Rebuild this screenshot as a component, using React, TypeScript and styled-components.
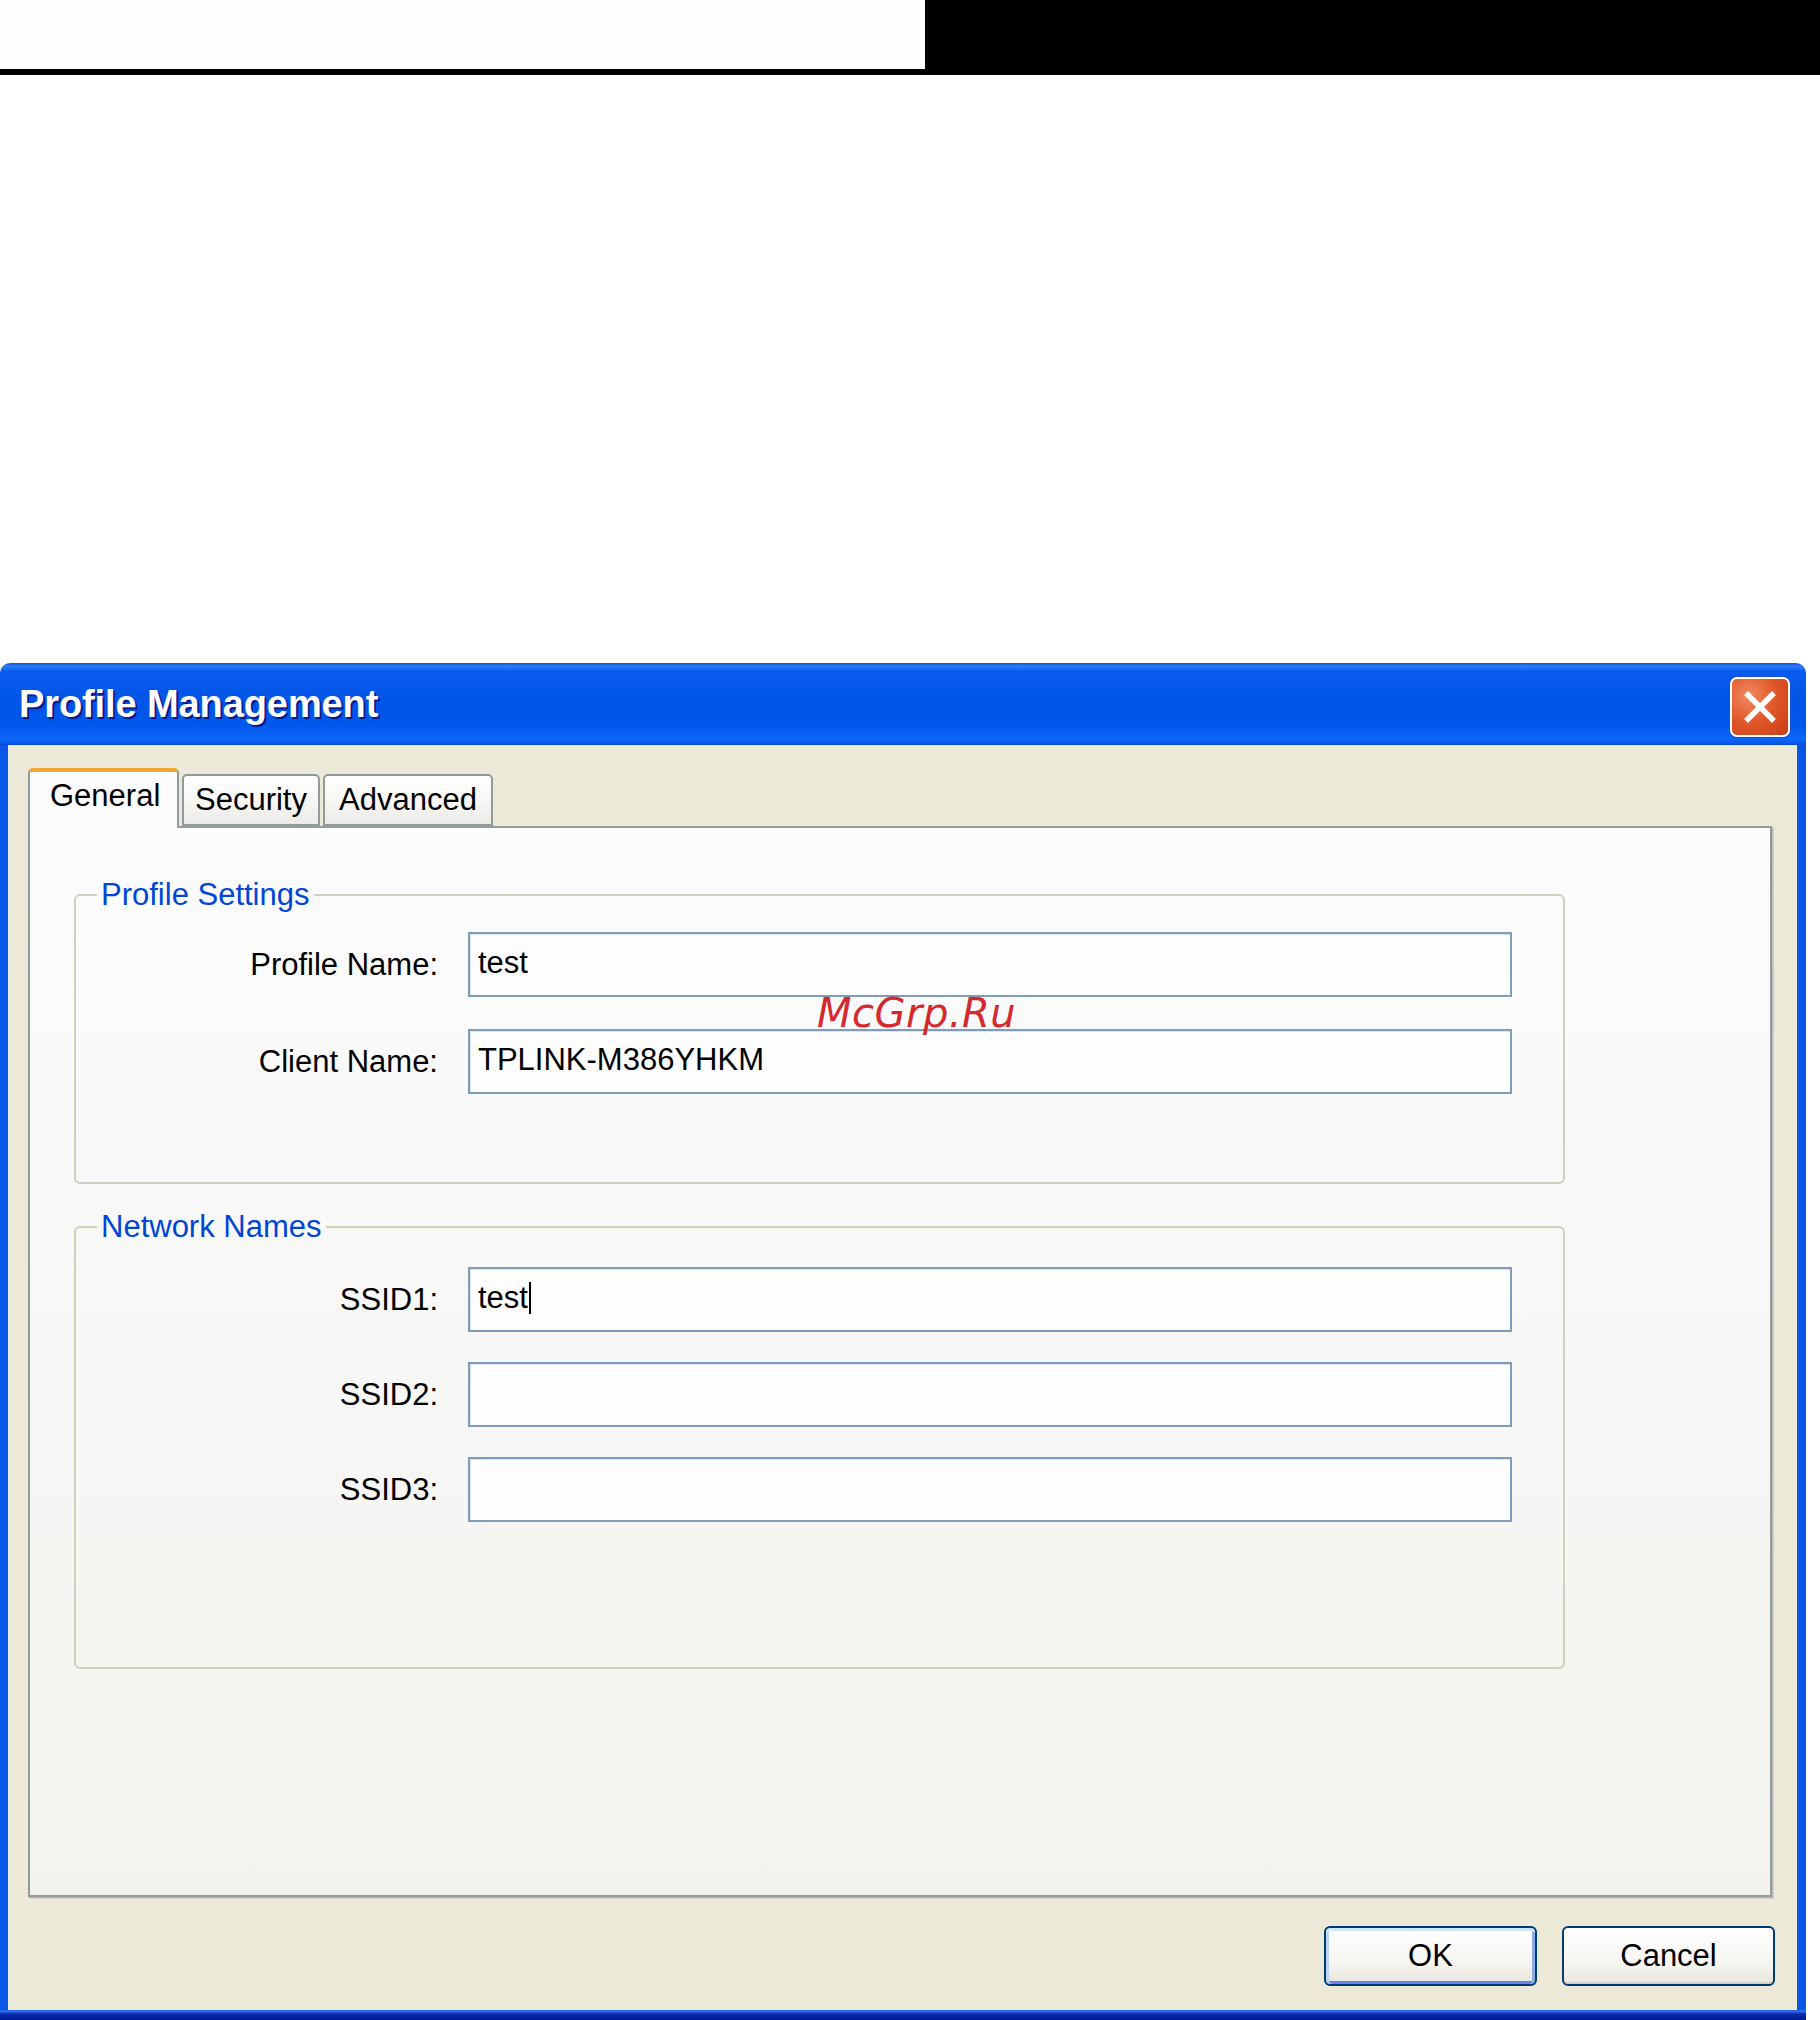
import React from "react";
import styled, { createGlobalStyle } from "styled-components";

const GlobalStyle = createGlobalStyle`
  html, body {
    margin: 0;
    padding: 0;
    background: #ffffff;
  }
  * {
    box-sizing: border-box;
  }
`;

const Page = styled.div`
  position: relative;
  width: 1820px;
  height: 2020px;
  overflow: hidden;
  background: #ffffff;
  font-family: "Liberation Sans", Arial, sans-serif;
`;

const TopBar = styled.header`
  display: flex;
  height: 75px;
`;

const TopBlank = styled.div`
  width: 925px;
  background: #fefefe;
  border-bottom: 6px solid #000;
`;

const TopBlock = styled.div`
  flex: 1;
  background: #000;
`;

const Window = styled.section`
  margin-top: 588px;
  width: 1806px;
  height: 1357px;
  display: flex;
  flex-direction: column;
`;

const TitleBar = styled.div`
  height: 82px;
  flex-shrink: 0;
  display: flex;
  align-items: center;
  justify-content: space-between;
  padding: 0 16px 0 19px;
  border-radius: 10px 10px 0 0;
  background: linear-gradient(
    to bottom,
    #1a58d6 0%,
    #2b7cf7 4%,
    #0a5cef 10%,
    #0054e6 45%,
    #0058ec 75%,
    #0a66f8 92%,
    #0a5af0 97%,
    #0848d8 100%
  );
`;

const Title = styled.h1`
  margin: 0;
  font-family: "Liberation Sans", Arial, sans-serif;
  font-weight: 700;
  font-size: 38px;
  letter-spacing: -0.1px;
  color: #ffffff;
  text-shadow: 2px 2px 0 #0c1b8a;
`;

const CloseButton = styled.button`
  width: 60px;
  height: 60px;
  margin-top: 5px;
  padding: 0;
  display: flex;
  align-items: center;
  justify-content: center;
  border: 2px solid #ffffff;
  border-radius: 7px;
  background: radial-gradient(circle at 30% 30%, #f08b62 0%, #e25a2c 45%, #c93c12 100%);
  box-shadow: 0 0 0 1px #1c4fd0;
`;

const Frame = styled.div`
  flex: 1;
  display: flex;
  padding: 0 9px 10px 8px;
  background: linear-gradient(
    to bottom,
    #0a56e6 0%,
    #0a56e6 calc(100% - 10px),
    #3b78e8 calc(100% - 9px),
    #0a2bb0 calc(100% - 6px),
    #001a8f 100%
  );
`;

const Body = styled.div`
  flex: 1;
  display: flex;
  flex-direction: column;
  padding: 23px 25px 24px 20px;
  background: #ece9d8;
`;

const TabRow = styled.div`
  display: flex;
  align-items: flex-end;
  gap: 3px;
  height: 58px;
  position: relative;
  z-index: 1;
`;

const Tab = styled.div<{ $active?: boolean; $width: number; $pad: number }>`
  width: ${(p) => p.$width}px;
  height: ${(p) => (p.$active ? 60 : 52)}px;
  margin-bottom: ${(p) => (p.$active ? -2 : 0)}px;
  display: flex;
  align-items: center;
  padding-left: ${(p) => p.$pad}px;
  padding-bottom: ${(p) => (p.$active ? 8 : 0)}px;
  font-size: 31px;
  color: #000;
  border: 2px solid #919b9c;
  border-bottom: ${(p) => (p.$active ? "none" : "2px solid #919b9c")};
  border-top: ${(p) => (p.$active ? "4px solid #f2a535" : "2px solid #919b9c")};
  border-radius: 5px 5px 0 0;
  background: ${(p) =>
    p.$active ? "#fcfcfe" : "linear-gradient(to bottom, #ffffff 0%, #f7f7f4 50%, #ecebe6 100%)"};
`;

const Panel = styled.div`
  height: 1071px;
  display: flex;
  flex-direction: column;
  gap: 25px;
  padding: 49px 205px 0 44px;
  border: 2px solid #919b9c;
  box-shadow: 1px 1px 0 #b7bab8, 2px 2px 0 #d4d2c6;
  background: linear-gradient(to bottom, #fcfcfe 0%, #f6f6f4 60%, #f3f2ed 100%);
`;

const Group = styled.fieldset<{ $padTop: number; $padBottom: number; $gap: number }>`
  margin: 0;
  padding: ${(p) => p.$padTop}px 51px ${(p) => p.$padBottom}px 0;
  border: 2px solid #d0d0bf;
  border-radius: 6px;
  display: grid;
  grid-template-columns: 362px 1fr;
  column-gap: 30px;
  row-gap: ${(p) => p.$gap}px;
  align-items: center;
`;

const Legend = styled.legend`
  margin-left: 21px;
  padding: 0 4px;
  font-size: 31px;
  line-height: 36px;
  color: #0046d5;
`;

const Label = styled.label`
  text-align: right;
  font-size: 31px;
  color: #000;
`;

const Field = styled.div`
  height: 65px;
  display: flex;
  align-items: center;
  padding: 0 8px 4px;
  font-size: 31px;
  color: #000;
  background: #fdfdfd;
  border: 2px solid #7f9db9;
  box-shadow: inset 1px 1px 0 #dbe3ec;
`;

const Caret = styled.span`
  display: inline-block;
  width: 2px;
  height: 32px;
  margin-left: 1px;
  background: #000;
`;

const ButtonRow = styled.div`
  margin-top: 29px;
  margin-right: -3px;
  display: flex;
  justify-content: flex-end;
  gap: 25px;
`;

const Button = styled.button<{ $default?: boolean }>`
  width: 213px;
  height: 60px;
  font-family: "Liberation Sans", Arial, sans-serif;
  font-size: 31px;
  color: #000;
  border: 2px solid #003c74;
  border-radius: 6px;
  background: linear-gradient(to bottom, #ffffff 0%, #f6f5f1 60%, #e8e6dc 100%);
  box-shadow: ${(p) =>
    p.$default
      ? "inset 0 3px 0 #cee7ff, inset 3px 0 0 #bcd4f6, inset -3px 0 0 #89ade4, inset 0 -3px 0 #6982ee"
      : "inset 0 -2px 0 #d6d0c5"};
`;

const Watermark = styled.div`
  position: absolute;
  left: 817px;
  top: 989px;
  font-family: "DejaVu Sans", sans-serif;
  font-style: italic;
  font-size: 40px;
  line-height: 48px;
  letter-spacing: 0.5px;
  color: #d42a2f;
`;

export default function App() {
  return (
    <Page>
      <GlobalStyle />
      <TopBar>
        <TopBlank />
        <TopBlock />
      </TopBar>

      <Window>
        <TitleBar>
          <Title>Profile Management</Title>
          <CloseButton aria-label="Close">
            <svg width="34" height="34" viewBox="0 0 34 34">
              <path
                d="M5 5 L29 29 M29 5 L5 29"
                stroke="#ffffff"
                strokeWidth="5.5"
                strokeLinecap="square"
              />
            </svg>
          </CloseButton>
        </TitleBar>

        <Frame>
          <Body>
            <TabRow>
              <Tab $active $width={151} $pad={20}>
                General
              </Tab>
              <Tab $width={138} $pad={11}>
                Security
              </Tab>
              <Tab $width={170} $pad={14}>
                Advanced
              </Tab>
            </TabRow>

            <Panel>
              <Group $padTop={19} $padBottom={88} $gap={32}>
                <Legend>Profile Settings</Legend>
                <Label>Profile Name:</Label>
                <Field>test</Field>
                <Label>Client Name:</Label>
                <Field>TPLINK-M386YHKM</Field>
              </Group>

              <Group $padTop={22} $padBottom={145} $gap={30}>
                <Legend>Network Names</Legend>
                <Label>SSID1:</Label>
                <Field>
                  test
                  <Caret />
                </Field>
                <Label>SSID2:</Label>
                <Field />
                <Label>SSID3:</Label>
                <Field />
              </Group>
            </Panel>

            <ButtonRow>
              <Button $default>OK</Button>
              <Button>Cancel</Button>
            </ButtonRow>
          </Body>
        </Frame>
      </Window>

      <Watermark>McGrp.Ru</Watermark>
    </Page>
  );
}
